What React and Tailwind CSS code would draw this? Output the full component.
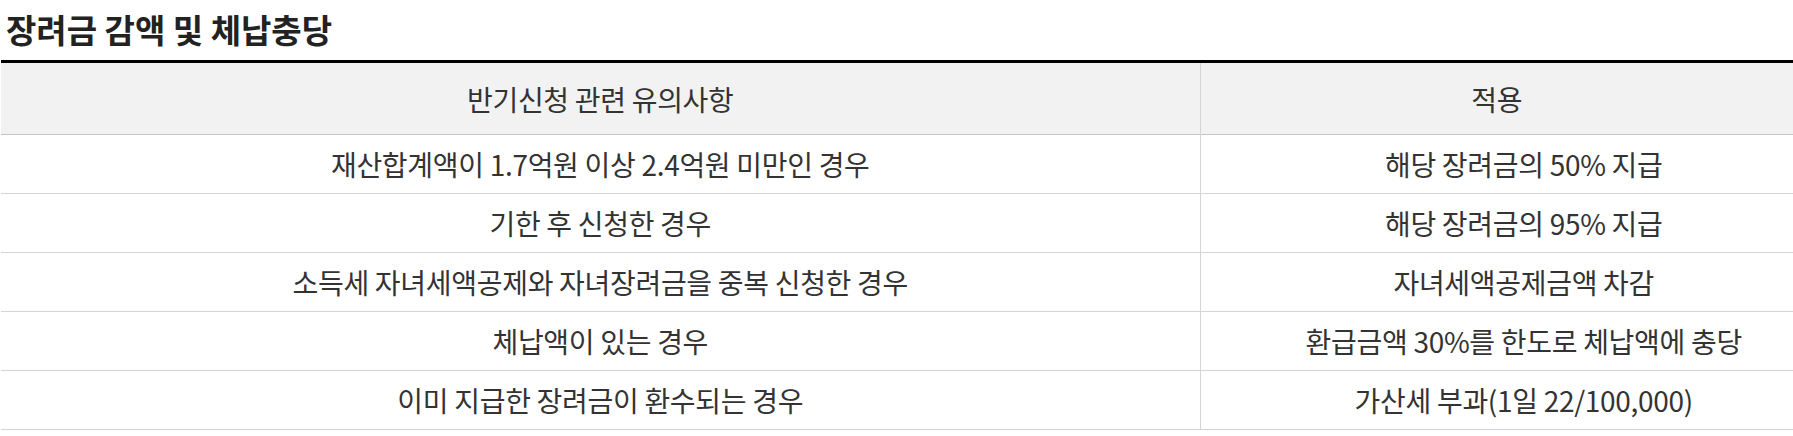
import React from 'react';

const rows = [
  ['재산합계액이 1.7억원 이상 2.4억원 미만인 경우', '해당 장려금의 50% 지급'],
  ['기한 후 신청한 경우', '해당 장려금의 95% 지급'],
  ['소득세 자녀세액공제와 자녀장려금을 중복 신청한 경우', '자녀세액공제금액 차감'],
  ['체납액이 있는 경우', '환급금액 30%를 한도로 체납액에 충당'],
  ['이미 지급한 장려금이 환수되는 경우', '가산세 부과(1일 22/100,000)'],
];

export default function App() {
  return (
    <div className="w-[1793px] bg-white font-['Noto_Sans_CJK_KR','Noto_Sans',sans-serif] text-[#333]">
      <h2 className="h-[60px] pl-[6px] pt-[3px] text-[33px] font-bold leading-[52px] text-[#222]">
        장려금 감액 및 체납충당
      </h2>
      <table className="ml-px w-[1792px] table-fixed border-collapse border-t-[3px] border-black text-[28px] tracking-[-0.3px]">
        <colgroup>
          <col className="w-[1199px]" />
          <col />
        </colgroup>
        <thead>
          <tr className="h-[73px] bg-[#f2f2f2] border-b border-[#c4c4c4]">
            <th className="border-r border-[#d4d4d4] text-center font-normal">반기신청 관련 유의사항</th>
            <th className="text-center font-normal">적용</th>
          </tr>
        </thead>
        <tbody>
          {rows.map(([a, b]) => (
            <tr key={a} className="h-[59px] border-b border-[#d4d4d4]">
              <td className="border-r border-[#d4d4d4] text-center">{a}</td>
              <td className="pl-[54px] text-center">{b}</td>
            </tr>
          ))}
        </tbody>
      </table>
    </div>
  );
}
